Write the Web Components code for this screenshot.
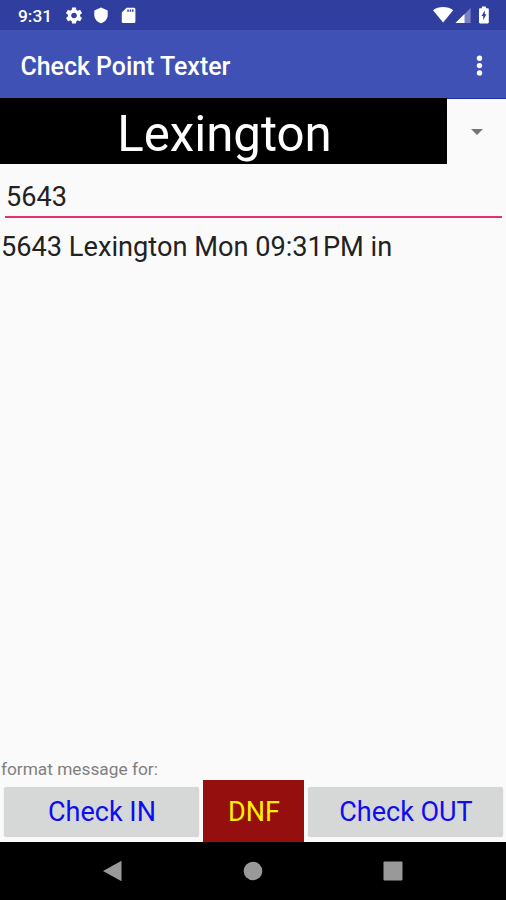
<!DOCTYPE html>
<html lang="en">
<head>
<meta charset="utf-8">
<title>Check Point Texter</title>
<style>
  body {
    margin: 0;
    font-family: Roboto, "Liberation Sans", sans-serif;
    background: #fafafa;
  }
</style>
</head>
<body>
<check-point-app></check-point-app>

<script>
class StatusBar extends HTMLElement {
  connectedCallback() {
    this.attachShadow({ mode: 'open' });
    this.shadowRoot.innerHTML = `
      <style>
        :host {
          display: flex;
          justify-content: space-between;
          box-sizing: border-box;
          height: 30px;
          padding: 6px 15px 0 18px;
          background: #303f9f;
          color: #fff;
        }
        .group { display: flex; align-items: flex-start; }
        .time {
          width: 46px;
          font-size: 17.3px;
          line-height: 20px;
          font-weight: 500;
        }
        svg { display: block; fill: currentColor; }
      </style>
      <div class="group">
        <span class="time"><slot></slot></span>
        <svg width="93" height="20" viewBox="64 6 93 20">
          <path transform="translate(64.3 5.8) scale(.81)" fill-rule="evenodd" d="M19.43 12.98c.04-.32.07-.64.07-.98s-.03-.66-.07-.98l2.11-1.65c.19-.15.24-.42.12-.64l-2-3.46c-.12-.22-.39-.3-.61-.22l-2.49 1c-.52-.4-1.08-.73-1.69-.98l-.38-2.65C14.46 2.18 14.25 2 14 2h-4c-.25 0-.46.18-.49.42l-.38 2.65c-.61.25-1.17.59-1.69.98l-2.49-1c-.23-.09-.49 0-.61.22l-2 3.46c-.13.22-.07.49.12.64l2.11 1.65c-.04.32-.07.65-.07.98s.03.66.07.98l-2.11 1.65c-.19.15-.24.42-.12.64l2 3.46c.12.22.39.3.61.22l2.49-1c.52.4 1.08.73 1.69.98l.38 2.65c.03.24.24.42.49.42h4c.25 0 .46-.18.49-.42l.38-2.65c.61-.25 1.17-.59 1.69-.98l2.49 1c.23.09.49 0 .61-.22l2-3.46c.12-.22.07-.49-.12-.64l-2.11-1.65zM12 15.5c-1.93 0-3.5-1.57-3.5-3.5s1.57-3.5 3.5-3.5 3.5 1.57 3.5 3.5-1.57 3.5-3.5 3.5z"/>
          <path d="M101 7.5l-6.7 2.9v4.6c0 4 2.9 7.2 6.7 8.2 3.8-1 6.7-4.2 6.7-8.2v-4.6z"/>
          <path fill-rule="evenodd" d="M133.8 7.7h-7.2l-4.8 4.8v9c0 .9.7 1.6 1.6 1.6h10.4c.9 0 1.6-.7 1.6-1.6V9.3c0-.9-.7-1.6-1.6-1.6zM127.3 9.6h1.5v2.2h-1.5zM129.7 9.6h1.5v2.2h-1.5zM132.1 9.6h1.5v2.2h-1.5z"/>
        </svg>
      </div>
      <div class="group">
        <svg width="60" height="20" viewBox="431 6 60 20">
          <path d="M433 10.3c5.5-4.3 14.7-4.3 20.2 0L443.1 22.5z"/>
          <path opacity=".35" d="M470.6 8v15h-15z"/>
          <path d="M464.5 14.1V23h-9z"/>
          <path fill-rule="evenodd" d="M487.6 8.3h-1.7V6.5h-4v1.8h-1.7c-.7 0-1.2.5-1.2 1.2v12.7c0 .7.5 1.2 1.2 1.2h7.4c.7 0 1.2-.5 1.2-1.2V9.5c0-.7-.5-1.2-1.2-1.2zM483.2 20.3v-4.2h-1.6l3.2-5.8v4h1.6z"/>
        </svg>
      </div>
    `;
  }
}

class AppToolbar extends HTMLElement {
  connectedCallback() {
    this.attachShadow({ mode: 'open' });
    this.shadowRoot.innerHTML = `
      <style>
        :host {
          display: flex;
          align-items: center;
          justify-content: space-between;
          box-sizing: border-box;
          height: 68px;
          padding: 3px 23px 0 20.5px;
          background: #3f51b5;
          color: #fff;
        }
        .title { padding-top: 1px; font-size: 24.9px; font-weight: 500; line-height: 31px; }
        svg { display: block; fill: currentColor; }
      </style>
      <span class="title"><slot></slot></span>
      <svg width="7" height="22" viewBox="0 0 7 22">
        <circle cx="3.5" cy="3.3" r="2.7"/>
        <circle cx="3.5" cy="10.6" r="2.7"/>
        <circle cx="3.5" cy="17.9" r="2.7"/>
      </svg>
    `;
  }
}

class PointSpinner extends HTMLElement {
  connectedCallback() {
    this.attachShadow({ mode: 'open' });
    this.shadowRoot.innerHTML = `
      <style>
        :host { display: flex; height: 66px; }
        .value {
          box-sizing: border-box;
          width: 447px;
          padding-left: 2px;
          background: #000;
          color: #fff;
          font-size: 49.2px;
          line-height: 73px;
          text-align: center;
        }
        .arrow {
          flex: 1;
          display: flex;
          align-items: center;
          justify-content: center;
          border-top: 1px solid #1c2fa3;
        }
        svg { display: block; fill: #757575; }
      </style>
      <div class="value"><slot></slot></div>
      <div class="arrow">
        <svg width="12" height="6" viewBox="0 0 12 6"><path d="M0 0h12L6 6z"/></svg>
      </div>
    `;
  }
}

class NumberField extends HTMLElement {
  connectedCallback() {
    this.attachShadow({ mode: 'open' });
    this.shadowRoot.innerHTML = `
      <style>
        :host {
          display: block;
          height: 38px;
          margin: 14px 4px 0 5px;
          padding-left: 1px;
          border-bottom: 2px solid #e9306f;
          color: #222;
          font-size: 27.1px;
          line-height: 38px;
        }
      </style>
      <slot></slot>
    `;
  }
}

class ActionButton extends HTMLElement {
  connectedCallback() {
    this.attachShadow({ mode: 'open' });
    this.shadowRoot.innerHTML = `
      <style>
        :host {
          display: flex;
          align-items: center;
          justify-content: center;
          box-sizing: border-box;
          width: 195px;
          height: 50px;
          margin-top: 1px;
          padding-left: 1px;
          border-radius: 3px;
          background: #d6d7d7;
          box-shadow: 0 0 1px #c4c5c5;
          color: #0d0df0;
          font-size: 27px;
        }
        :host([danger]) {
          width: 101px;
          height: 62px;
          margin-top: 0;
          padding-top: 2px;
          border-radius: 0;
          background: #950f0f;
          box-shadow: none;
          color: #ffee00;
        }
      </style>
      <slot></slot>
    `;
  }
}

class NavBar extends HTMLElement {
  connectedCallback() {
    this.attachShadow({ mode: 'open' });
    this.shadowRoot.innerHTML = `
      <style>
        :host {
          display: flex;
          align-items: center;
          justify-content: center;
          gap: 120px;
          height: 58px;
          background: #000;
        }
        svg { display: block; fill: #999; }
      </style>
      <svg width="20" height="22" viewBox="0 0 20 22"><path d="M0 11L18.5.8v20.4z"/></svg>
      <svg width="20" height="20" viewBox="0 0 20 20"><circle cx="10" cy="10" r="9.3"/></svg>
      <svg width="20" height="20" viewBox="0 0 20 20"><rect x=".5" y=".5" width="19" height="19" rx="1"/></svg>
    `;
  }
}

class CheckPointApp extends HTMLElement {
  connectedCallback() {
    this.attachShadow({ mode: 'open' });
    this.shadowRoot.innerHTML = `
      <style>
        :host {
          display: flex;
          flex-direction: column;
          width: 506px;
          height: 900px;
          overflow: hidden;
          background: #fafafa;
        }
        .message {
          flex: 1;
          padding: 10px 0 0 1px;
          color: #222;
          font-size: 27.2px;
          line-height: 38px;
        }
        .hint {
          padding-left: 1px;
          color: #808080;
          font-size: 17.3px;
          line-height: 22px;
        }
        .actions {
          display: flex;
          align-items: center;
          justify-content: space-between;
          height: 62px;
          padding: 0 3px 0 4px;
        }
      </style>
      <status-bar>9:31</status-bar>
      <app-toolbar>Check Point Texter</app-toolbar>
      <point-spinner>Lexington</point-spinner>
      <number-field>5643</number-field>
      <div class="message">5643 Lexington Mon 09:31PM in</div>
      <div class="hint">format message for:</div>
      <div class="actions">
        <action-button>Check IN</action-button>
        <action-button danger>DNF</action-button>
        <action-button>Check OUT</action-button>
      </div>
      <nav-bar></nav-bar>
    `;
  }
}

customElements.define('status-bar', StatusBar);
customElements.define('app-toolbar', AppToolbar);
customElements.define('point-spinner', PointSpinner);
customElements.define('number-field', NumberField);
customElements.define('action-button', ActionButton);
customElements.define('nav-bar', NavBar);
customElements.define('check-point-app', CheckPointApp);
</script>
</body>
</html>
